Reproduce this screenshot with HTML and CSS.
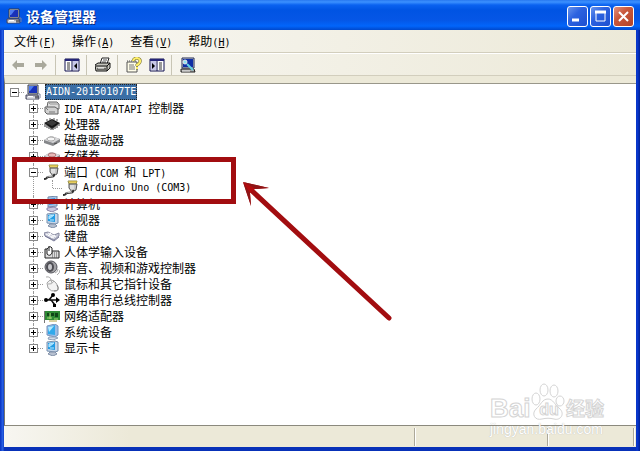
FILE: index.html
```
<!DOCTYPE html>
<html lang="zh-CN">
<head>
  <meta charset="UTF-8" />
  <title>设备管理器</title>
  <link rel="stylesheet" href="styles.css">
</head>
<body>

<svg class="sprite" aria-hidden="true">
  <symbol id="pc" viewBox="0 0 16 16">
    <path d="M3 1h10v9H3z" fill="#d8d4c8" stroke="#333a50"/>
    <path d="M4 2h8v7H4z" fill="#1831b8"/><path d="M4 2h5L5 7H4z" fill="#4d7cf0"/>
    <path d="M1 11h12l1 4H1z" fill="#b9b9c4" stroke="#44465c"/>
    <path d="M3 12.500h5M2 14h8" stroke="#fff"/><path d="M10 13h3" stroke="#222"/>
    <path d="M13 10h2v4" stroke="#77809c" fill="none"/>
  </symbol>
  <symbol id="ide" viewBox="0 0 16 16">
    <path d="M4 2h9l2 2v5H5L3 7z" fill="#ddd" stroke="#666"/>
    <path d="M4 2l2 2h9" fill="none" stroke="#999"/>
    <path d="M1 7h10l3 2v5H3l-2-2z" fill="#d2d2d2" stroke="#606060"/>
    <path d="M2 8l2 2h9M5 12h6" fill="none" stroke="#777"/><path d="M4 10h9" stroke="#fff"/>
  </symbol>
  <symbol id="chip" viewBox="0 0 16 16">
    <path d="M0 7l8-4 8 4-8 6z" fill="#151515"/>
    <path d="M2 7l6-3 5 3-5 3z" fill="#3b3b3b"/>
    <path d="M1 8v3M3 9v3M5 10v3M7 11v3M9 11v3M11 10v3M13 9v3M15 7v3" stroke="#333"/>
    <path d="M3 5V3M6 4V2M10 4V2M13 5V3" stroke="#555"/>
  </symbol>
  <symbol id="disk" viewBox="0 0 16 16">
    <path d="M0 8l7-4 9 3v3l-7 4-9-3z" fill="#85878a"/>
    <path d="M0 8l7-4 9 3-7 4z" fill="#d8d8da"/>
    <ellipse cx="7" cy="7" rx="4" ry="2" fill="#f6f6f6" stroke="#aaa"/>
    <path d="M10 12l3-1" stroke="#4d4d4d"/>
  </symbol>
  <symbol id="volume" viewBox="0 0 16 16">
    <path d="M0 8l7-4 9 3v3l-7 4-9-3z" fill="#86868c"/>
    <path d="M0 8l7-4 9 3-7 4z" fill="#dedee2"/>
    <ellipse cx="8" cy="7" rx="4" ry="2" fill="#e8b8b8" stroke="#a77"/>
  </symbol>
  <symbol id="port" viewBox="0 0 16 16">
    <path d="M5 1h9l-1 3H6z" fill="#fff0a0" stroke="#99904c"/>
    <path d="M7 1v2M9 1v2M11 1v2M13 1v2" stroke="#d0ae23"/>
    <path d="M6 4h8l-1 6-4 2-3-4z" fill="#c8c8c8" stroke="#555"/>
    <path d="M8 5v4M10 5v4" stroke="#f6f6f6"/>
    <path d="M10 10c1 4-4 2-6 3s-1 2-4 2" fill="none" stroke="#333" stroke-width="2"/>
    <path d="M9 12c-2 1-4 0-6 1" fill="none" stroke="#bbb"/>
  </symbol>
  <symbol id="computer" viewBox="0 0 16 16">
    <path d="M4 1l9-1v10l-9 1z" fill="#a8c4e4" stroke="#7188a8"/>
    <path d="M5 3l6-1v6l-6 1z" fill="#378fe2"/>
    <path d="M3 12l7-1 4 2-6 3-5-2z" fill="#c9c8e0" stroke="#8b83aa"/>
  </symbol>
  <symbol id="monitor" viewBox="0 0 16 16">
    <path d="M3 2l8-1 3 1v9l-3 1-8-1z" fill="#c5d5e8" stroke="#768fad"/>
    <path d="M4 3l7-1v8l-7-1z" fill="#239ce4"/><path d="M5 4l5-1-5 4zM6 8h4" fill="#8ed9ff" stroke="#b8e8ff"/>
    <path d="M6 12h5l2 2-4 2-5-2z" fill="#b6c0d0" stroke="#8190a8"/>
  </symbol>
  <symbol id="keyboard" viewBox="0 0 16 16">
    <path d="M0 5l4-1 6 3 5-2v3l-5 4-9-4z" fill="#c8cad8" stroke="#8789a0"/>
    <path d="M2 6l8 4M4 5l8 4M4 8l3-3M7 10l4-3" stroke="#fff"/>
    <path d="M1 8l9 5 5-4" stroke="#777997" fill="none"/>
  </symbol>
  <symbol id="hid" viewBox="0 0 16 16">
    <path d="M1 5h5v2h9v7H1z" fill="#ddd" stroke="#222"/>
    <path d="M8 9h6M8 11h6M8 13h6" stroke="#555" stroke-dasharray="1 1"/>
    <path d="M3 5v5q3 3 5-1V4q-2-3-5 1z" fill="#fff" stroke="#222"/>
    <path d="M5 2v5" stroke="#222"/>
  </symbol>
  <symbol id="sound" viewBox="0 0 16 16">
    <ellipse cx="7" cy="7" rx="6" ry="6" fill="#a1a1a5" stroke="#55555c"/>
    <ellipse cx="6" cy="7" rx="4" ry="5" fill="#4d4d53"/>
    <ellipse cx="6" cy="7" rx="2" ry="3" fill="#c8c8cc"/>
    <path d="M11 13q3-1 3-4M13 15q3-2 3-5" stroke="#aaa" fill="none"/>
  </symbol>
  <symbol id="mouse" viewBox="0 0 16 16">
    <path d="M2 1q5-1 5 4" fill="none" stroke="#aaa"/>
    <path d="M3 7q4-6 9 0 5 7 0 8t-8-3z" fill="#f3f3f3" stroke="#a3a3a3"/>
    <path d="M4 8q4 1 6-3M7 4l1 3" stroke="#aaa" fill="none"/>
    <path d="M13 9q3 6-3 6" stroke="#858585" fill="none"/>
  </symbol>
  <symbol id="usb" viewBox="0 0 16 16">
    <path d="M2 8h12M4 8c3 0 3-5 6-5M6 8c3 0 3 5 6 5" fill="none" stroke="#111" stroke-width="1.500"/>
    <circle cx="2" cy="8" r="2"/><path d="M12 5l4 3-4 3zM9 12h3v3H9z"/><circle cx="9" cy="3" r="2"/>
  </symbol>
  <symbol id="net" viewBox="0 0 16 16">
    <path d="M0 3h1v12H0z" fill="#777"/><path d="M1 3h15v9H1z" fill="#2f8a35"/>
    <path d="M3 5h3v3H3zM7 5h3v3H7zM11 5h3v4h-3z" fill="#104619"/>
    <path d="M3 10h5M10 11h4M6 5v6" stroke="#a6da75"/><path d="M5 13h8" stroke="#b3a444"/>
  </symbol>
  <symbol id="system" viewBox="0 0 16 16">
    <path d="M3 2l8-2 3 2v9l-3 2-8-2z" fill="#9cbde5" stroke="#7593bd"/>
    <path d="M4 3l7-2v10l-7-1z" fill="#31a9eb"/><path d="M4 3l6-1-5 6z" fill="#b5eaff"/>
    <path d="M5 13h7l2 1-5 2-5-1z" fill="#d1dbe9" stroke="#8c9fb7"/>
  </symbol>
  <symbol id="panel" viewBox="0 0 16 16">
    <path d="M1 2h14v12H1z" fill="#fff" stroke="#101050"/>
    <path d="M1 3h14" stroke="#252577" stroke-width="2"/>
    <path d="M8 4v10" stroke="#101050"/>
    <path d="M3 6h3M3 8h3M3 10h3M3 12h3" stroke="#333"/>
    <path d="M9 4h5v9H9z" fill="#c8c8e8"/><path d="M13 6v6l-3-3z"/>
  </symbol>
</svg>

<div class="window">
  <div class="title-bar">
    <svg class="icon"><use href="#pc"/></svg>
    <h1>设备管理器</h1>
    <button class="win-btn" aria-label="最小化"><svg viewBox="0 0 19 19"><path d="M4 13h7" stroke="#fff" stroke-width="3"/></svg></button>
    <button class="win-btn" aria-label="最大化"><svg viewBox="0 0 19 19"><path d="M5 5h9v9H5z" fill="none" stroke="#fff"/><path d="M4 5h11" stroke="#fff" stroke-width="3"/></svg></button>
    <button class="win-btn close" aria-label="关闭"><svg viewBox="0 0 19 19"><path d="M5 5l9 9M14 5l-9 9" stroke="#fff" stroke-width="2"/></svg></button>
  </div>

  <div class="menu-bar">
    <button>文件<span class="en">(<u>F</u>)</span></button>
    <button>操作<span class="en">(<u>A</u>)</span></button>
    <button>查看<span class="en">(<u>V</u>)</span></button>
    <button>帮助<span class="en">(<u>H</u>)</span></button>
  </div>

  <div class="toolbar">
    <button aria-label="后退" disabled><svg class="icon" viewBox="0 0 16 16"><path d="M2 8l5-5v3h7v4H7v3z" fill="#aaa99c"/></svg></button>
    <button aria-label="前进" disabled><svg class="icon" viewBox="0 0 16 16"><path d="M14 8L9 3v3H2v4h7v3z" fill="#aaa99c"/></svg></button>
    <span class="sep"></span>
    <button aria-label="显示控制台树"><svg class="icon"><use href="#panel"/></svg></button>
    <span class="sep"></span>
    <button aria-label="打印"><svg class="icon" viewBox="0 0 16 16">
      <path d="M5 7l2-6h7l-2 6z" fill="#fff" stroke="#222"/><path d="M8 3h4M7 5h4" stroke="#555"/>
      <path d="M0 8l3-2h12v5l-3 3H1z" fill="#c4c4bc" stroke="#111"/><path d="M1 9h11l3-3M12 9v5M2 12h9" fill="none" stroke="#111"/><path d="M3 11h6" stroke="#fff"/>
    </svg></button>
    <span class="sep"></span>
    <button aria-label="属性"><svg class="icon" viewBox="0 0 16 16">
      <path d="M1 5h10v10H1z" fill="#fffde9" stroke="#555"/><path d="M3 8h5M3 10h6M3 12h6" stroke="#777"/><path d="M1 4h9" stroke="#555" stroke-dasharray="1 1"/>
      <path d="M7 4q1-3 4-3 4 1 3 4-1 2-3 3v1M10 11h2" fill="none" stroke="#777033" stroke-width="3"/><path d="M7 4q1-3 4-3 4 1 3 4-1 2-3 3v1M10 11h2" fill="none" stroke="#fff06a" stroke-width="2"/>
    </svg></button>
    <button aria-label="显示操作窗格"><svg class="icon flip"><use href="#panel"/></svg></button>
    <span class="sep"></span>
    <button aria-label="扫描检测硬件改动"><svg class="icon" viewBox="0 0 16 16">
      <path d="M2 1h12v10H2z" fill="#cfd5df" stroke="#222a54"/><path d="M3 2h10v8H3z" fill="#102fa5"/>
      <path d="M1 12h13l1 3H1z" fill="#aaa" stroke="#222"/><circle cx="5" cy="5" r="2" fill="#8ce5f0" stroke="#eee"/><path d="M7 7l6 6" stroke="#65d4e6" stroke-width="2"/><path d="M2 14h8" stroke="#eee"/>
    </svg></button>
  </div>

  <main class="pane">
    <ul class="tree">
      <li>
        <div class="row"><button class="toggle open" aria-label="折叠"></button><svg class="icon"><use href="#pc"/></svg><span class="label en selected">AIDN-20150107TE</span></div>
        <ul>
          <li><div class="row"><button class="toggle" aria-label="展开"></button><svg class="icon"><use href="#ide"/></svg><span class="label"><span class="en">IDE ATA/ATAPI </span>控制器</span></div></li>
          <li><div class="row"><button class="toggle" aria-label="展开"></button><svg class="icon"><use href="#chip"/></svg><span class="label">处理器</span></div></li>
          <li><div class="row"><button class="toggle" aria-label="展开"></button><svg class="icon"><use href="#disk"/></svg><span class="label">磁盘驱动器</span></div></li>
          <li><div class="row"><button class="toggle" aria-label="展开"></button><svg class="icon"><use href="#volume"/></svg><span class="label">存储卷</span></div></li>
          <li>
            <div class="row"><button class="toggle open" aria-label="折叠"></button><svg class="icon"><use href="#port"/></svg><span class="label">端口<span class="en"> (COM </span>和<span class="en"> LPT)</span></span></div>
            <ul>
              <li><div class="row leaf"><svg class="icon"><use href="#port"/></svg><span class="label en">Arduino Uno (COM3)</span></div></li>
            </ul>
          </li>
          <li><div class="row"><button class="toggle" aria-label="展开"></button><svg class="icon"><use href="#computer"/></svg><span class="label">计算机</span></div></li>
          <li><div class="row"><button class="toggle" aria-label="展开"></button><svg class="icon"><use href="#monitor"/></svg><span class="label">监视器</span></div></li>
          <li><div class="row"><button class="toggle" aria-label="展开"></button><svg class="icon"><use href="#keyboard"/></svg><span class="label">键盘</span></div></li>
          <li><div class="row"><button class="toggle" aria-label="展开"></button><svg class="icon"><use href="#hid"/></svg><span class="label">人体学输入设备</span></div></li>
          <li><div class="row"><button class="toggle" aria-label="展开"></button><svg class="icon"><use href="#sound"/></svg><span class="label">声音、视频和游戏控制器</span></div></li>
          <li><div class="row"><button class="toggle" aria-label="展开"></button><svg class="icon"><use href="#mouse"/></svg><span class="label">鼠标和其它指针设备</span></div></li>
          <li><div class="row"><button class="toggle" aria-label="展开"></button><svg class="icon"><use href="#usb"/></svg><span class="label">通用串行总线控制器</span></div></li>
          <li><div class="row"><button class="toggle" aria-label="展开"></button><svg class="icon"><use href="#net"/></svg><span class="label">网络适配器</span></div></li>
          <li><div class="row"><button class="toggle" aria-label="展开"></button><svg class="icon"><use href="#system"/></svg><span class="label">系统设备</span></div></li>
          <li><div class="row"><button class="toggle" aria-label="展开"></button><svg class="icon"><use href="#monitor"/></svg><span class="label">显示卡</span></div></li>
        </ul>
      </li>
    </ul>

    <!-- callout around the serial port -->
    <div class="callout"></div>
    <svg class="arrow" viewBox="0 0 150 140">
      <path d="M8 8l138 128" stroke="#a20d10" stroke-width="5" stroke-linecap="round"/>
      <path d="M0 0l26 6-14 1-5 4 1 13z" fill="#b40b0e"/>
      <path d="M0 0l26 6-13 1zM0 0l8 24-1-13z" fill="#8e1517"/>
    </svg>
  </main>

  <div class="status-bar">
    <span class="cell wide"></span>
    <span class="cell mid"></span>
    <span class="cell end"></span>
  </div>

  <div class="watermark">
    <div class="brand">
      <span>Bai</span>
      <span class="paw">
        <svg viewBox="0 0 34 38"><g fill="#fff" stroke="#d4d4d4">
          <ellipse cx="5" cy="16" rx="4" ry="6"/><ellipse cx="13" cy="7" rx="4" ry="6"/><ellipse cx="23" cy="8" rx="4" ry="6"/><ellipse cx="29" cy="18" rx="4" ry="5"/>
          <path d="M17 16c5 0 7 6 11 9 7 6 1 13-5 11-4-1-8-1-12 0-7 2-11-5-6-10 5-4 6-10 12-10z"/>
        </g></svg>
        <span class="du">du</span>
      </span>
      <span class="cn">经验</span>
    </div>
    <div class="site">jingyan.baidu.com</div>
  </div>
</div>

</body>
</html>
```

FILE: styles.css
```
* {
  box-sizing: border-box;
}
body {
  margin: 0;
  font-family: "Noto Sans CJK SC", sans-serif;
  font-size: 12px;
  line-height: 16px;
  color: #000;
}
button {
  padding: 0;
  border: none;
  background: none;
  font: inherit;
  color: inherit;
}
ul {
  list-style: none;
  margin: 0;
  padding: 0;
}
.sprite {
  display: none;
}
.icon {
  width: 16px;
  height: 16px;
  flex: none;
}
.flip {
  transform: scaleX(-1);
}
.en {
  font-family: "DejaVu Sans Mono", monospace;
  font-size: 10px;
  line-height: 12px;
  white-space: pre;
}
.window {
  position: relative;
  display: flex;
  flex-direction: column;
  min-height: 100vh;
  padding: 0 4px 4px;
  background: linear-gradient(90deg, #0730c0, #2b66e8 3px, #0831b8 4px, #0831b8 calc(100% - 4px), #0a3cd8 calc(100% - 3px), #001f94);
}

/* title bar */
.title-bar {
  display: flex;
  align-items: center;
  gap: 2px;
  height: 30px;
  margin: 0 -4px;
  padding: 2px 6px 0;
  background: linear-gradient(#2878f0, #3c91ff 2px, #0a62f0 5px, #0054e3 10px, #0556e6 20px, #0265fb 26px, #0048cc);
}
.title-bar h1 {
  flex: 1;
  margin: 0 0 0 2px;
  font-size: 14px;
  line-height: 20px;
  color: #fff;
  text-shadow: 1px 1px #0a2a80;
}
.win-btn {
  width: 21px;
  height: 21px;
  border: 1px solid #fff;
  border-radius: 3px;
  background: linear-gradient(135deg, #6793ec, #2c62e0 40%, #1d4fd0);
}
.win-btn svg {
  display: block;
}
.close {
  background: linear-gradient(135deg, #e09080, #c9583c 40%, #b24328);
}

/* menu and toolbar */
.menu-bar {
  display: flex;
  gap: 16px;
  height: 23px;
  padding: 0 10px;
  background: linear-gradient(90deg, #f9f8f4, #ece9d8);
  border-bottom: 1px solid #d2cebd;
}
.toolbar {
  display: flex;
  align-items: center;
  height: 23px;
  padding: 0 2px;
  background: linear-gradient(90deg, #f9f8f4, #ece9d8);
  border-top: 1px solid #fff;
  border-bottom: 1px solid #d2cebd;
}
.toolbar button {
  display: flex;
  justify-content: center;
  width: 23px;
}
.sep {
  width: 1px;
  height: 20px;
  margin: 0 4px 0 3px;
  background: #c8c5b5;
}

/* device tree */
.pane {
  position: relative;
  flex: 1;
  padding: 1px 4px;
  background: #fff;
  border-top: 7px solid #ece9d8;
  border-left: 1px solid #77776f;
  border-bottom: 1px solid #8b897d;
  box-shadow: inset 0 1px #99978a;
}
.tree ul {
  padding-left: 19px;
}
.tree li {
  position: relative;
}
.tree ul > li::before {
  content: "";
  position: absolute;
  left: 5px;
  top: 0;
  bottom: 0;
  border-left: 1px dotted #999;
}
.tree ul > li:last-child::before {
  bottom: auto;
  height: 8px;
}
.row {
  position: relative;
  display: flex;
  align-items: center;
  height: 16px;
}
.row::before {
  content: "";
  position: absolute;
  left: 6px;
  top: 8px;
  width: 9px;
  border-top: 1px dotted #999;
}
.toggle {
  position: relative;
  width: 9px;
  height: 9px;
  margin: 0 6px 0 1px;
  border: 1px solid #888;
  background:
    linear-gradient(#000, #000) center / 5px 1px no-repeat,
    linear-gradient(#000, #000) center / 1px 5px no-repeat,
    #fff;
}
.toggle.open {
  background: linear-gradient(#000, #000) center / 5px 1px no-repeat, #fff;
}
.leaf {
  padding-left: 16px;
}
.label {
  margin-left: 4px;
  white-space: pre;
}
.selected {
  padding: 0 1px;
  line-height: 16px;
  background: #3a6ea5;
  outline: 1px dotted #222;
  outline-offset: -1px;
  color: #fff;
}
.callout {
  position: absolute;
  left: 7px;
  top: 74px;
  width: 224px;
  height: 47px;
  border: 5px solid #a20d10;
}
.arrow {
  position: absolute;
  left: 238px;
  top: 99px;
  width: 150px;
  height: 140px;
}

/* status bar */
.status-bar {
  display: flex;
  height: 21px;
  padding: 2px 2px 1px 0;
  background: linear-gradient(90deg, #f7f6f1, #ece9d8 20%);
}
.cell {
  border-right: 1px solid #aca899;
  box-shadow: 1px 0 #fff;
}
.wide {
  flex: 1;
}
.mid {
  width: 133px;
}
.end {
  width: 86px;
}

.watermark {
  position: absolute;
  right: 36px;
  bottom: 14px;
  width: 114px;
  color: #fff;
  -webkit-text-stroke: 1px #d4d4d4;
}
.brand {
  display: flex;
  align-items: flex-end;
  justify-content: space-between;
  font: bold 26px/26px "Liberation Sans", sans-serif;
}
.paw {
  position: relative;
  width: 34px;
  height: 38px;
}
.du {
  position: absolute;
  left: 8px;
  top: 18px;
  font-size: 16px;
  line-height: 18px;
}
.cn {
  font: bold 19px/26px "Noto Sans CJK SC", sans-serif;
}
.site {
  font: 14px/16px "Liberation Sans", sans-serif;
  -webkit-text-stroke: 0;
  text-shadow: 0 0 1px #aaa;
}
```
